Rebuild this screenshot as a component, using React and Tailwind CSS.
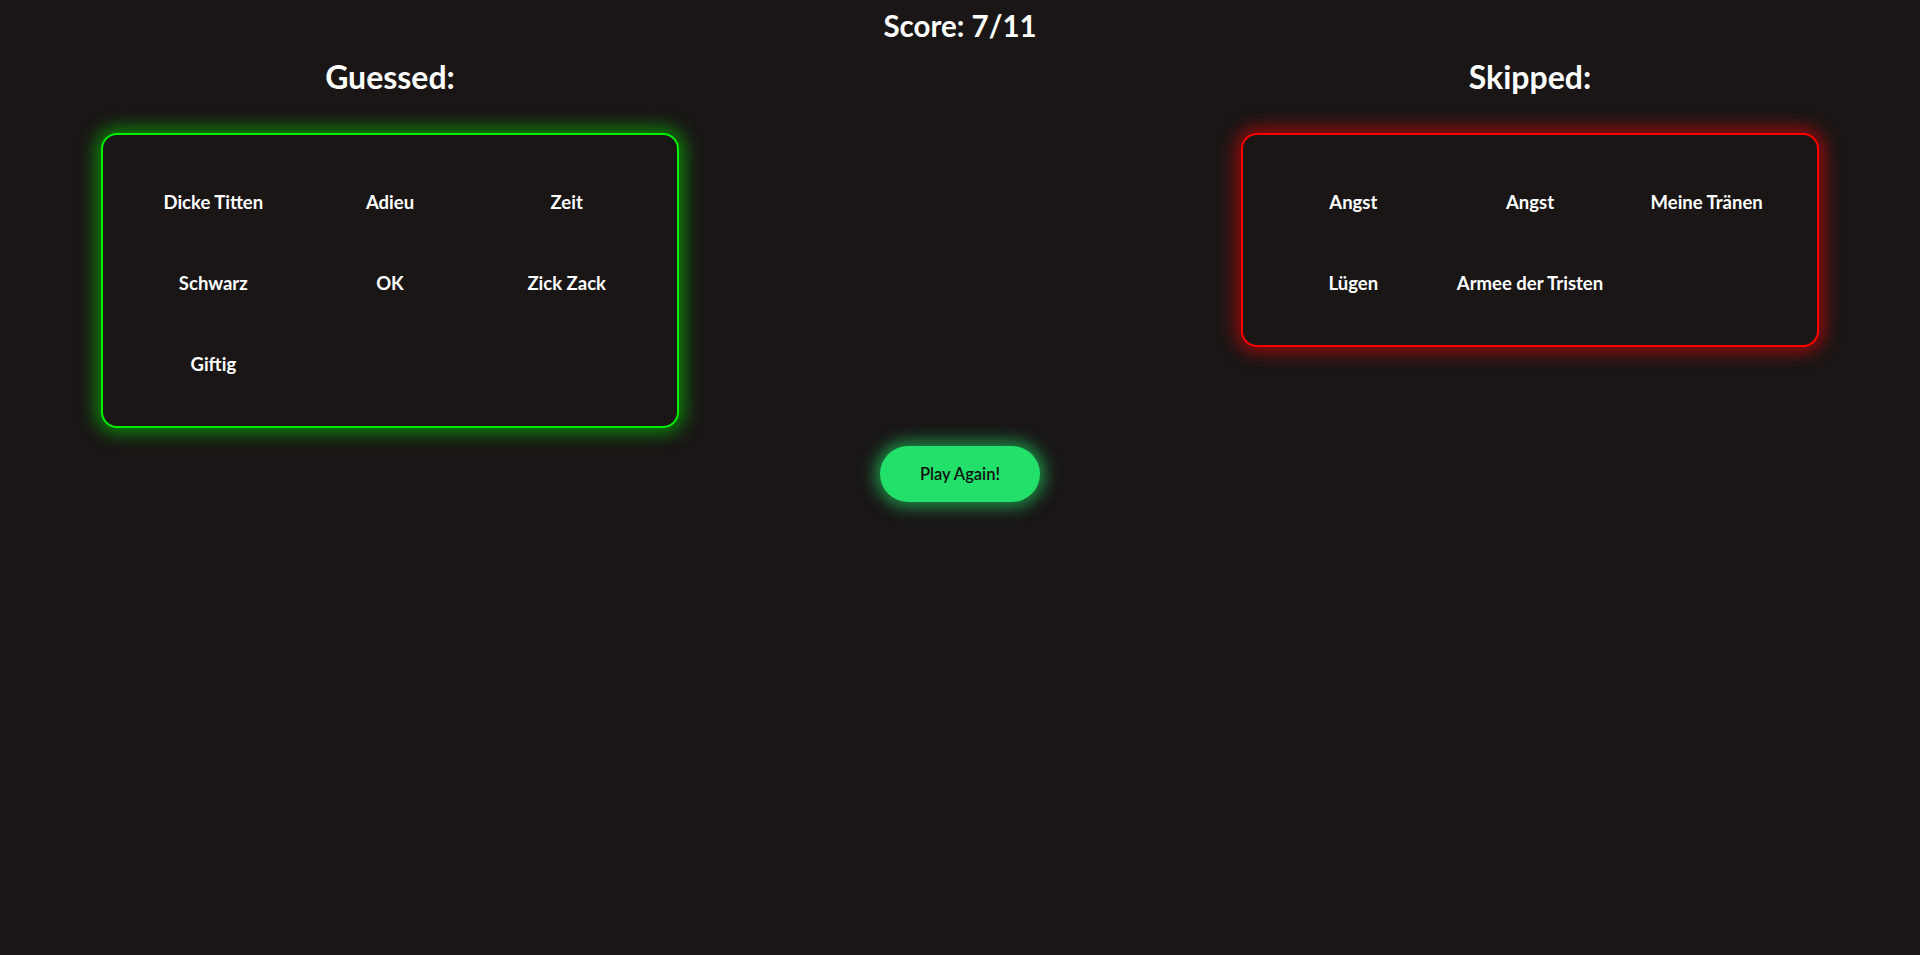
import React from "react";

const guessed = ["Dicke Titten", "Adieu", "Zeit", "Schwarz", "OK", "Zick Zack", "Giftig"];
const skipped = ["Angst", "Angst", "Meine Tränen", "Lügen", "Armee der Tristen"];

const WordBox = ({ words, tone }) => {
  const boxClass =
    tone === "green"
      ? "border-[#00ee00] shadow-[0_0_18px_5px_rgba(0,230,0,0.55)]"
      : "border-[#ff0000] shadow-[0_0_18px_5px_rgba(255,0,0,0.55)]";
  return (
    <div className={`w-[578px] rounded-2xl border-2 bg-[#191615] px-[22px] pt-[27px] pb-[21px] ${boxClass}`}>
      <div className="grid grid-cols-3">
        {words.map((w, i) => (
          <div key={i} className="h-[81px] flex items-center justify-center text-[18.5px] font-bold text-white">
            {w}
          </div>
        ))}
      </div>
    </div>
  );
};

export default function App() {
  return (
    <div className="min-h-[955px] bg-[#191615] text-white font-['Lato',_'Noto_Sans',_sans-serif]">
      <h1 className="h-[52px] flex items-center justify-center text-[29.5px] font-bold">Score: 7/11</h1>

      <div className="flex justify-between px-[101px]">
        <div className="flex flex-col items-center">
          <h2 className="h-[50px] flex items-center text-[32px] font-bold">Guessed:</h2>
          <div className="mt-[31px]">
            <WordBox words={guessed} tone="green" />
          </div>
        </div>
        <div className="flex flex-col items-center">
          <h2 className="h-[50px] flex items-center text-[32px] font-bold">Skipped:</h2>
          <div className="mt-[31px]">
            <WordBox words={skipped} tone="red" />
          </div>
        </div>
      </div>

      <div className="flex justify-center mt-[18px]">
        <button className="w-[160px] h-[56px] rounded-full bg-[#22e06a] text-[16.5px] font-semibold text-[#111] shadow-[0_0_16px_5px_rgba(34,224,106,0.6)]">
          Play Again!
        </button>
      </div>
    </div>
  );
}
